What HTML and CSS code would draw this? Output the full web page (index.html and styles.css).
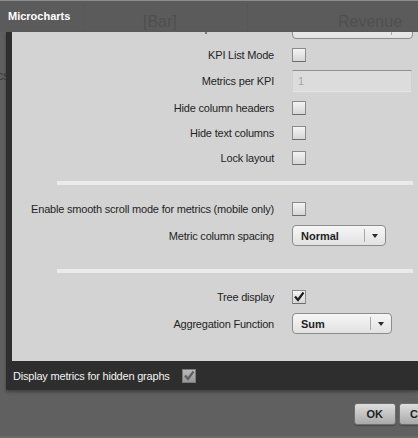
FILE: index.html
```html
<!DOCTYPE html>
<html>
<head>
<meta charset="utf-8">
<link rel="stylesheet" href="styles.css">
</head>
<body>
<div class="screen">
  <div class="ghost">
    <span class="ghost-text ghost-bar">[Bar]</span>
    <span class="ghost-text ghost-rev">Revenue</span>
    <span class="ghost-line ghost-line-1"></span>
    <span class="ghost-line ghost-line-2"></span>
    <span class="ghost-cs">cs</span>
  </div>
  <header class="titlebar"><span class="title">Microcharts</span></header>
  <div class="frame">
    <div class="content">
      <div class="scroller">
        <div class="row row-28">
          <span class="label">Template Selection</span>
          <div class="select select-wide"><span class="select-text"></span><span class="select-btn"><span class="tri"></span></span></div>
        </div>
        <div class="row row-25">
          <span class="label">KPI List Mode</span>
          <span class="cb"></span>
        </div>
        <div class="row row-28">
          <span class="label">Metrics per KPI</span>
          <div class="input">1</div>
        </div>
        <div class="row row-25">
          <span class="label">Hide column headers</span>
          <span class="cb"></span>
        </div>
        <div class="row row-25">
          <span class="label">Hide text columns</span>
          <span class="cb"></span>
        </div>
        <div class="row row-25">
          <span class="label">Lock layout</span>
          <span class="cb"></span>
        </div>
        <div class="sep sep-1"></div>
        <div class="row row-25">
          <span class="label">Enable smooth scroll mode for metrics (mobile only)</span>
          <span class="cb"></span>
        </div>
        <div class="row row-29">
          <span class="label">Metric column spacing</span>
          <div class="select select-normal"><span class="select-text">Normal</span><span class="select-btn"><span class="tri"></span></span></div>
        </div>
        <div class="sep sep-2"></div>
        <div class="row row-25">
          <span class="label">Tree display</span>
          <span class="cb cb-checked"><svg viewBox="0 0 14 14" width="14" height="14"><path d="M3 6.5 L6 10 L11.5 2.5" fill="none" stroke="#1e1e1e" stroke-width="2.2"/></svg></span>
        </div>
        <div class="row row-29">
          <span class="label">Aggregation Function</span>
          <div class="select select-sum"><span class="select-text">Sum</span><span class="select-btn"><span class="tri"></span></span></div>
        </div>
      </div>
    </div>
    <div class="bottombar">
      <span class="bb-label">Display metrics for hidden graphs</span>
      <span class="cb cb-dim"><svg viewBox="0 0 14 14" width="14" height="14"><path d="M3 6.5 L6 10 L11.5 2.5" fill="none" stroke="#5c6066" stroke-width="2.2"/></svg></span>
    </div>
  </div>
  <div class="footer">
    <button class="btn">OK</button>
    <button class="btn btn-cancel">Cancel</button>
  </div>
</div>
</body>
</html>
```
FILE: styles.css
```css
* { box-sizing: border-box; }
html, body {
  margin: 0;
  padding: 0;
  background: #606060;
  overflow: hidden;
}
body {
  font-family: "Liberation Sans", Arial, sans-serif;
  font-size: 11px;
  letter-spacing: -0.2px;
  color: #1f1f1f;
}
.screen {
  position: relative;
  width: 418px;
  height: 438px;
  overflow: hidden;
  background: #606060;
  border-bottom: 2px solid #6a6a6a;
}
.ghost {
  position: absolute;
  inset: 0;
  pointer-events: none;
}
.ghost-text {
  position: absolute;
  top: 13px;
  font-size: 16px;
  letter-spacing: 0;
  color: #4f4f4f;
  z-index: 2;
}
.ghost-bar { left: 143px; }
.ghost-rev { left: 338px; }
.ghost-line {
  position: absolute;
  top: 4px;
  height: 26px;
  width: 0;
  border-left: 1px dotted #555555;
  z-index: 2;
}
.ghost-line-1 { left: 83px; }
.ghost-line-2 { left: 247px; }
.ghost-cs {
  position: absolute;
  left: -3px;
  top: 68px;
  font-size: 13px;
  color: #3e3e3e;
}
.titlebar {
  position: relative;
  height: 32px;
  background: #5b5b5b;
  border-top: 1px solid #8c8c8c;
  display: flex;
  align-items: center;
  padding-left: 8px;
}
.title {
  position: relative;
  z-index: 3;
  color: #ffffff;
  font-weight: bold;
  font-size: 11px;
  letter-spacing: 0;
  margin-top: -1px;
}
.frame {
  position: relative;
  margin-left: 6px;
  background: #2e2e2e;
  box-shadow: 0 2px 3px rgba(0, 0, 0, 0.35);
}
.content {
  margin-left: 6px;
  height: 329px;
  background: #d3d3d3;
  overflow: hidden;
}
.scroller {
  margin-top: -18px;
}
.row {
  display: flex;
  align-items: center;
  gap: 18px;
}
.row-25 { height: 25px; }
.row-28 { height: 28px; }
.row-29 { height: 29px; }
.label {
  width: 262px;
  flex: none;
  text-align: right;
  white-space: nowrap;
  color: #1f1f1f;
}
.cb {
  width: 14px;
  height: 14px;
  flex: none;
  border: 1px solid #8a8a8a;
  border-bottom-color: #6c6c6c;
  background: linear-gradient(#f4f4f4, #d6d6d6);
  display: block;
  position: relative;
}
.cb svg {
  position: absolute;
  left: -1px;
  top: -1px;
}
.cb-dim {
  border-color: #7a7a7a;
  background: linear-gradient(#b9b9b9, #979797);
}
.input {
  width: 120px;
  height: 22px;
  background: #dcdcdc;
  border-top: 1px solid #8e8e8e;
  border-left: 1px solid #d0d0d0;
  border-right: 1px solid #d0d0d0;
  border-bottom: 1px solid #e4e4e4;
  color: #a4a8a8;
  padding-left: 5px;
  line-height: 20px;
}
.select {
  height: 21px;
  border: 1px solid #8c8c8c;
  border-radius: 4px;
  background: linear-gradient(#f6f6f6, #e2e2e2);
  display: flex;
  align-items: center;
  flex: none;
}
.select-wide { width: 121px; }
.select-normal { width: 94px; }
.select-sum { width: 100px; }
.select-text {
  flex: 1;
  font-weight: bold;
  padding-left: 8px;
  color: #1f1f1f;
  letter-spacing: 0;
}
.select-btn {
  width: 21px;
  height: 13px;
  border-left: 1px solid #a8a8a8;
  display: flex;
  align-items: center;
  justify-content: center;
}
.tri {
  width: 0;
  height: 0;
  border-left: 3.5px solid transparent;
  border-right: 3.5px solid transparent;
  border-top: 4px solid #2a2a2a;
}
.sep {
  height: 4px;
  background: #ebebeb;
  margin-left: 45px;
  margin-right: 5px;
}
.sep-1 { margin-top: 11px; margin-bottom: 11px; }
.sep-2 { margin-top: 19px; margin-bottom: 11px; }
.bottombar {
  height: 29px;
  display: flex;
  align-items: center;
  padding-left: 7px;
  gap: 12px;
}
.bb-label {
  color: #f2f2f2;
  white-space: nowrap;
}
.footer {
  display: flex;
  justify-content: flex-end;
  gap: 3px;
  margin-right: -41px;
  padding-top: 13px;
}
.btn {
  height: 22px;
  padding: 0 12px;
  border: 1px solid #6e6e6e;
  border-radius: 3px;
  background: linear-gradient(#dedede, #a9a9a9);
  font-family: "Liberation Sans", Arial, sans-serif;
  font-size: 11px;
  font-weight: bold;
  color: #222;
  box-shadow: 0 1px 1px rgba(0, 0, 0, 0.25);
}
.btn-cancel { padding: 0 10px; width: 60px; text-align: left; }
```
